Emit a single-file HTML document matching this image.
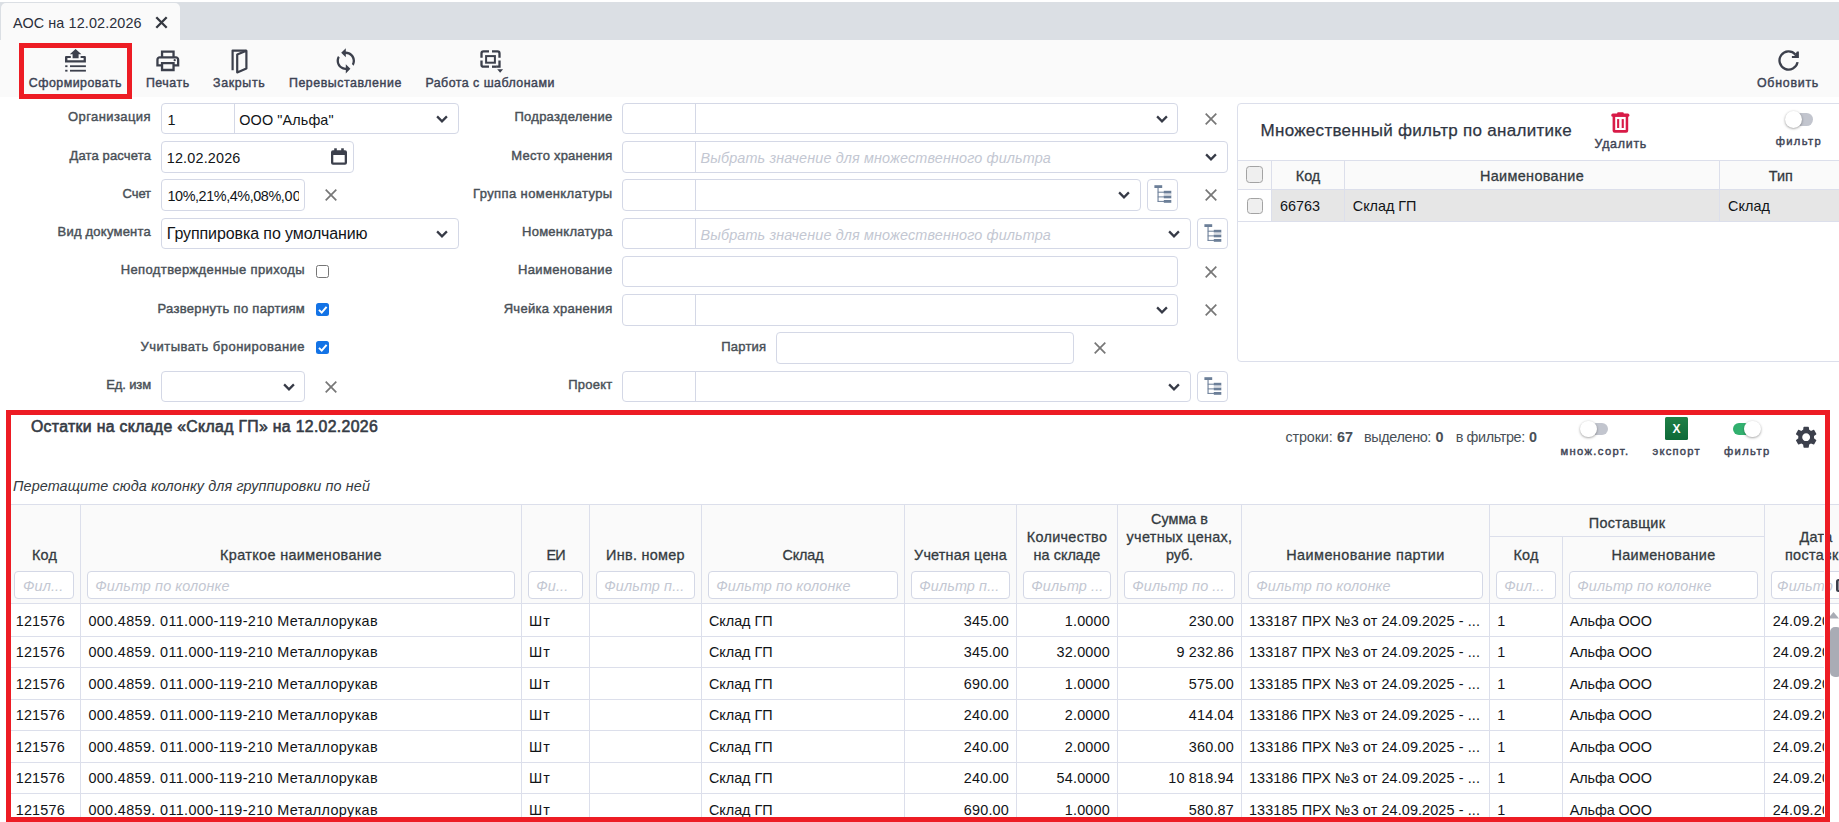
<!DOCTYPE html>
<html><head><meta charset="utf-8"><title>АОС</title>
<style>
html,body{margin:0;padding:0}
body{width:1839px;height:822px;overflow:hidden;background:#fff;position:relative;font-family:"Liberation Sans", sans-serif;}
.t{position:absolute;white-space:nowrap;line-height:20px;font-family:"Liberation Sans", sans-serif;}
.b{position:absolute;display:block}
</style></head><body>
<div class="b" style="left:0.00px;top:2.00px;width:1839.00px;height:38.00px;background:#dbdfe4"></div>
<div class="b" style="left:1.00px;top:3.00px;width:179.00px;height:37.00px;background:#fafafa;border-radius:5px 5px 0 0"></div>
<div class="b" style="left:0.00px;top:40.00px;width:1839.00px;height:57.00px;background:#fafafa"></div>
<div class="t" style="left:13.00px;top:13.01px;font-size:14.4px;font-weight:normal;font-style:normal;color:#2b2f3a;letter-spacing:0.109px;">АОС на 12.02.2026</div>
<svg class="b" style="left:155.00px;top:16.20px;" width="13" height="13" viewBox="0 0 13 13"><path d="M1.3 1.3 L11.7 11.7 M11.7 1.3 L1.3 11.7" stroke="#343840" stroke-width="2.3" fill="none" stroke-linecap="butt"/></svg>
<div class="t" style="left:28.80px;top:72.50px;font-size:12.4px;font-weight:normal;font-style:normal;color:#3d4354;letter-spacing:0.488px;-webkit-text-stroke:0.42px #3d4354;">Сформировать</div>
<div class="t" style="left:145.90px;top:72.50px;font-size:12.4px;font-weight:normal;font-style:normal;color:#3d4354;letter-spacing:0.535px;-webkit-text-stroke:0.42px #3d4354;">Печать</div>
<div class="t" style="left:213.00px;top:72.50px;font-size:12.4px;font-weight:normal;font-style:normal;color:#3d4354;letter-spacing:0.668px;-webkit-text-stroke:0.42px #3d4354;">Закрыть</div>
<div class="t" style="left:289.00px;top:72.50px;font-size:12.4px;font-weight:normal;font-style:normal;color:#3d4354;letter-spacing:0.536px;-webkit-text-stroke:0.42px #3d4354;">Перевыставление</div>
<div class="t" style="left:425.40px;top:72.50px;font-size:12.4px;font-weight:normal;font-style:normal;color:#3d4354;letter-spacing:0.479px;-webkit-text-stroke:0.42px #3d4354;">Работа с шаблонами</div>
<div class="t" style="left:1757.00px;top:72.50px;font-size:12.4px;font-weight:normal;font-style:normal;color:#3d4354;letter-spacing:0.737px;-webkit-text-stroke:0.42px #3d4354;">Обновить</div>
<svg class="b" style="left:64.00px;top:48.00px;" width="24" height="25" viewBox="64 48 24 25"><g fill="#3c404c">
<path d="M75.6 49 L81.4 54.3 L78.6 54.3 L78.6 58.3 L72.6 58.3 L72.6 54.3 L69.8 54.3 Z"/>
<path d="M66.1 55.9 H70.8 V58.1 H67.4 V60.3 H83.6 V58.1 H80.6 V55.9 H84.8 Q85.9 55.9 85.9 57 V62.6 H65 V57 Q65 55.9 66.1 55.9 Z"/>
<rect x="65.2" y="65.3" width="2.3" height="1.8"/><rect x="70" y="65.3" width="15.9" height="1.8"/>
<rect x="65.2" y="69.8" width="2.3" height="1.8"/><rect x="70" y="69.8" width="15.9" height="1.8"/>
</g></svg>
<svg class="b" style="left:153.70px;top:46.75px;" width="27.6" height="27.6" viewBox="0 0 24 24"><path fill="#3c404c" d="M19 8h-1V3H6v5H5c-1.66 0-3 1.34-3 3v6h4v4h12v-4h4v-6c0-1.66-1.34-3-3-3zM8 5h8v3H8V5zm8 12v2H8v-4h8v2zm2-2v-2H6v2H4v-4c0-.55.45-1 1-1h14c.55 0 1 .45 1 1v4h-2z"/><circle cx="18" cy="11.5" r="1" fill="#3c404c"/></svg>
<svg class="b" style="left:229.00px;top:47.00px;" width="22" height="28" viewBox="229 47 22 28"><g fill="none" stroke="#3c404c" stroke-width="2.2" stroke-linejoin="round" stroke-linecap="butt">
<path d="M232.6 70.2 V50.6 H246.4"/>
<path d="M237.2 54.6 L246.4 50.8 V68.6 L237.2 72.4 Z"/></g></svg>
<svg class="b" style="left:331.70px;top:46.70px;" width="27.6" height="27.6" viewBox="0 0 24 24"><path fill="#3c404c" d="M12 4V1L8 5l4 4V6c3.31 0 6 2.69 6 6 0 1.01-.25 1.97-.7 2.8l1.46 1.46C19.54 15.03 20 13.57 20 12c0-4.42-3.58-8-8-8zm0 14c-3.31 0-6-2.69-6-6 0-1.01.25-1.97.7-2.8L5.24 7.74C4.46 8.97 4 10.43 4 12c0 4.42 3.58 8 8 8v3l4-4-4-4v3z"/></svg>
<svg class="b" style="left:478.00px;top:48.00px;" width="28" height="27" viewBox="478 48 28 27"><g fill="none" stroke="#3c404c" stroke-width="2.3">
<path d="M481.5 57.8 V53.4 Q481.5 51.4 483.5 51.4 H489"/>
<path d="M492 51.4 H497.5 Q499.5 51.4 499.5 53.4 V57.8"/>
<path d="M481.5 60.5 V64.7 Q481.5 66.7 483.5 66.7 H489"/>
<path d="M499.5 60.5 V66.7 H496.2"/><path d="M492 66.7 H496.4" stroke-width="2.3"/>
<rect x="486.1" y="56.1" width="8.8" height="6.6" stroke-width="2"/></g>
<path fill="#3c404c" d="M497.2 69.3 H503.1 L500.15 72.8 Z"/></svg>
<svg class="b" style="left:1776.00px;top:48.00px;" width="26" height="26" viewBox="1776 48 26 26"><g fill="none" stroke="#3c404c" stroke-width="2.3" stroke-linecap="butt">
<path d="M1795.4 54.4 A9.1 9.1 0 1 0 1797.56 62.1"/></g>
<path fill="#3c404c" d="M1796.9 51.4 H1798.9 V58 H1791.9 V56 L1794.3 56 Z"/></svg>
<div class="b" style="left:19.00px;top:43.00px;width:113.00px;height:56.00px;border:5px solid #ed1c24;box-sizing:border-box"></div>
<div class="t" style="left:68.00px;top:106.80px;font-size:13px;font-weight:normal;font-style:normal;color:#495057;letter-spacing:0.418px;-webkit-text-stroke:0.42px #495057;">Организация</div>
<div class="t" style="left:69.50px;top:145.90px;font-size:13px;font-weight:normal;font-style:normal;color:#495057;letter-spacing:0.140px;-webkit-text-stroke:0.42px #495057;">Дата расчета</div>
<div class="t" style="left:122.50px;top:184.00px;font-size:13px;font-weight:normal;font-style:normal;color:#495057;letter-spacing:-0.067px;-webkit-text-stroke:0.42px #495057;">Счет</div>
<div class="t" style="left:57.50px;top:221.50px;font-size:13px;font-weight:normal;font-style:normal;color:#495057;letter-spacing:0.229px;-webkit-text-stroke:0.42px #495057;">Вид документа</div>
<div class="t" style="left:120.75px;top:260.40px;font-size:13px;font-weight:normal;font-style:normal;color:#495057;letter-spacing:0.378px;-webkit-text-stroke:0.42px #495057;">Неподтвержденные приходы</div>
<div class="t" style="left:157.50px;top:298.70px;font-size:13px;font-weight:normal;font-style:normal;color:#495057;letter-spacing:0.319px;-webkit-text-stroke:0.42px #495057;">Развернуть по партиям</div>
<div class="t" style="left:140.50px;top:336.90px;font-size:13px;font-weight:normal;font-style:normal;color:#495057;letter-spacing:0.473px;-webkit-text-stroke:0.42px #495057;">Учитывать бронирование</div>
<div class="t" style="left:106.25px;top:374.90px;font-size:13px;font-weight:normal;font-style:normal;color:#495057;letter-spacing:-0.127px;-webkit-text-stroke:0.42px #495057;">Ед. изм</div>
<div class="b" style="left:161.00px;top:103.00px;width:298.20px;height:31.00px;border:1px solid #d4d8e6;border-radius:4px;box-sizing:border-box;background:#fff"></div>
<div class="b" style="left:233.50px;top:104.00px;width:1.00px;height:29.00px;background:#d4d8e6"></div>
<div class="t" style="left:167.50px;top:109.61px;font-size:14.4px;font-weight:normal;font-style:normal;color:#111417;letter-spacing:0.000px;">1</div>
<div class="t" style="left:239.30px;top:109.61px;font-size:14.4px;font-weight:normal;font-style:normal;color:#111417;letter-spacing:0.115px;">ООО &quot;Альфа&quot;</div>
<svg class="b" style="left:435.00px;top:114.00px;" width="14" height="10" viewBox="-7 -5 14 10"><path d="M-4.9 -2.6 L0 2.3 L4.9 -2.6" fill="none" stroke="#363a46" stroke-width="2.3"/></svg>
<div class="b" style="left:161.00px;top:141.00px;width:193.30px;height:32.00px;border:1px solid #d4d8e6;border-radius:4px;box-sizing:border-box;background:#fff"></div>
<div class="t" style="left:166.75px;top:147.61px;font-size:14.4px;font-weight:normal;font-style:normal;color:#111417;letter-spacing:0.173px;">12.02.2026</div>
<svg class="b" style="left:330.00px;top:147.00px;" width="18" height="19" viewBox="330 147 18 19"><g fill="#3c404c"><rect x="334.2" y="148.3" width="2.6" height="4"/><rect x="341.2" y="148.3" width="2.6" height="4"/>
<path fill-rule="evenodd" d="M333 150.2 H345 Q347 150.2 347 152.2 V162.8 Q347 164.8 345 164.8 H333 Q331 164.8 331 162.8 V152.2 Q331 150.2 333 150.2 Z M333.3 155 V162.5 H344.7 V155 Z"/></g></svg>
<div class="b" style="left:161.00px;top:179.00px;width:143.60px;height:32.00px;border:1px solid #d4d8e6;border-radius:4px;box-sizing:border-box;background:#fff"></div>
<div class="b" style="left:162px;top:180.00px;width:137px;height:28px;overflow:hidden"><div class="t" style="left:5.5px;top:5.61px;font-size:14.4px;letter-spacing:-0.42px;color:#111417">10%,21%,4%,08%,<span style="letter-spacing:0.45px">00%,01%</span></div></div>
<svg class="b" style="left:324.00px;top:188.10px;" width="14" height="14" viewBox="-7 -7 14 14"><path d="M-5.3 -5.3 L5.3 5.3 M5.3 -5.3 L-5.3 5.3" fill="none" stroke="#777" stroke-width="1.7"/></svg>
<div class="b" style="left:161.00px;top:218.00px;width:298.20px;height:31.00px;border:1px solid #d4d8e6;border-radius:4px;box-sizing:border-box;background:#fff"></div>
<div class="t" style="left:166.75px;top:224.06px;font-size:16px;font-weight:normal;font-style:normal;color:#111417;letter-spacing:-0.098px;">Группировка по умолчанию</div>
<svg class="b" style="left:435.00px;top:229.00px;" width="14" height="10" viewBox="-7 -5 14 10"><path d="M-4.9 -2.6 L0 2.3 L4.9 -2.6" fill="none" stroke="#363a46" stroke-width="2.3"/></svg>
<div class="b" style="left:316.00px;top:264.60px;width:13.40px;height:13.40px;background:#fff;border:1.3px solid #767676;border-radius:2.5px;box-sizing:border-box"></div>
<div class="b" style="left:316.00px;top:302.60px;width:13.40px;height:13.40px;background:#1373e6;border-radius:2.5px"></div>
<svg class="b" style="left:316.00px;top:302.60px;" width="13.4" height="13.4" viewBox="0 0 13.4 13.4"><path d="M3 6.9 L5.7 9.6 L10.6 3.9" fill="none" stroke="#fff" stroke-width="2"/></svg>
<div class="b" style="left:316.00px;top:340.60px;width:13.40px;height:13.40px;background:#1373e6;border-radius:2.5px"></div>
<svg class="b" style="left:316.00px;top:340.60px;" width="13.4" height="13.4" viewBox="0 0 13.4 13.4"><path d="M3 6.9 L5.7 9.6 L10.6 3.9" fill="none" stroke="#fff" stroke-width="2"/></svg>
<div class="b" style="left:161.00px;top:371.00px;width:143.60px;height:31.00px;border:1px solid #d4d8e6;border-radius:4px;box-sizing:border-box;background:#fff"></div>
<svg class="b" style="left:281.75px;top:382.00px;" width="14" height="10" viewBox="-7 -5 14 10"><path d="M-4.9 -2.6 L0 2.3 L4.9 -2.6" fill="none" stroke="#363a46" stroke-width="2.3"/></svg>
<svg class="b" style="left:324.00px;top:380.10px;" width="14" height="14" viewBox="-7 -7 14 14"><path d="M-5.3 -5.3 L5.3 5.3 M5.3 -5.3 L-5.3 5.3" fill="none" stroke="#777" stroke-width="1.7"/></svg>
<div class="t" style="left:514.50px;top:106.80px;font-size:13px;font-weight:normal;font-style:normal;color:#495057;letter-spacing:0.251px;-webkit-text-stroke:0.42px #495057;">Подразделение</div>
<div class="t" style="left:511.25px;top:145.90px;font-size:13px;font-weight:normal;font-style:normal;color:#495057;letter-spacing:0.218px;-webkit-text-stroke:0.42px #495057;">Место хранения</div>
<div class="t" style="left:473.00px;top:184.00px;font-size:13px;font-weight:normal;font-style:normal;color:#495057;letter-spacing:0.397px;-webkit-text-stroke:0.42px #495057;">Группа номенклатуры</div>
<div class="t" style="left:522.00px;top:221.50px;font-size:13px;font-weight:normal;font-style:normal;color:#495057;letter-spacing:0.271px;-webkit-text-stroke:0.42px #495057;">Номенклатура</div>
<div class="t" style="left:518.00px;top:260.40px;font-size:13px;font-weight:normal;font-style:normal;color:#495057;letter-spacing:0.365px;-webkit-text-stroke:0.42px #495057;">Наименование</div>
<div class="t" style="left:503.70px;top:298.70px;font-size:13px;font-weight:normal;font-style:normal;color:#495057;letter-spacing:0.299px;-webkit-text-stroke:0.42px #495057;">Ячейка хранения</div>
<div class="t" style="left:721.30px;top:336.90px;font-size:13px;font-weight:normal;font-style:normal;color:#495057;letter-spacing:0.204px;-webkit-text-stroke:0.42px #495057;">Партия</div>
<div class="t" style="left:568.20px;top:374.90px;font-size:13px;font-weight:normal;font-style:normal;color:#495057;letter-spacing:0.246px;-webkit-text-stroke:0.42px #495057;">Проект</div>
<div class="b" style="left:622.00px;top:103.00px;width:555.50px;height:31.00px;border:1px solid #d4d8e6;border-radius:4px;box-sizing:border-box;background:#fff"></div>
<div class="b" style="left:694.50px;top:104.00px;width:1.00px;height:29.00px;background:#d4d8e6"></div>
<svg class="b" style="left:1155.00px;top:114.00px;" width="14" height="10" viewBox="-7 -5 14 10"><path d="M-4.9 -2.6 L0 2.3 L4.9 -2.6" fill="none" stroke="#363a46" stroke-width="2.3"/></svg>
<svg class="b" style="left:1204.00px;top:112.10px;" width="14" height="14" viewBox="-7 -7 14 14"><path d="M-5.3 -5.3 L5.3 5.3 M5.3 -5.3 L-5.3 5.3" fill="none" stroke="#777" stroke-width="1.7"/></svg>
<div class="b" style="left:622.00px;top:141.00px;width:605.50px;height:32.00px;border:1px solid #d4d8e6;border-radius:4px;box-sizing:border-box;background:#fff"></div>
<div class="b" style="left:694.50px;top:142.00px;width:1.00px;height:30.00px;background:#d4d8e6"></div>
<svg class="b" style="left:1204.00px;top:152.00px;" width="14" height="10" viewBox="-7 -5 14 10"><path d="M-4.9 -2.6 L0 2.3 L4.9 -2.6" fill="none" stroke="#363a46" stroke-width="2.3"/></svg>
<div class="t" style="left:700.50px;top:147.61px;font-size:14.4px;font-weight:normal;font-style:italic;color:#c3c7d2;letter-spacing:0.139px;">Выбрать значение для множественного фильтра</div>
<div class="b" style="left:622.00px;top:179.00px;width:518.50px;height:32.00px;border:1px solid #d4d8e6;border-radius:4px;box-sizing:border-box;background:#fff"></div>
<div class="b" style="left:694.50px;top:180.00px;width:1.00px;height:30.00px;background:#d4d8e6"></div>
<svg class="b" style="left:1116.75px;top:190.00px;" width="14" height="10" viewBox="-7 -5 14 10"><path d="M-4.9 -2.6 L0 2.3 L4.9 -2.6" fill="none" stroke="#363a46" stroke-width="2.3"/></svg>
<div class="b" style="left:1147.20px;top:179.00px;width:30.50px;height:32.00px;border:1px solid #d4d8e6;border-radius:4px;box-sizing:border-box;background:#fff"></div>
<svg class="b" style="left:1147.20px;top:179.00px;" width="31" height="31" viewBox="1147.2 179.4 31 31"><g fill="#6c7f98">
<rect x="1154.6" y="185.6" width="7.8" height="2.8"/>
<rect x="1157.7" y="188.4" width="1.1" height="13.9"/>
<rect x="1158" y="192.1" width="6.2" height="1"/><rect x="1158" y="196.8" width="6.2" height="1"/><rect x="1158" y="201.3" width="6.2" height="1"/>
<rect x="1164" y="191.2" width="7.5" height="2.8"/><rect x="1164" y="195.9" width="7.5" height="2.8"/><rect x="1164" y="200.4" width="7.5" height="2.8"/>
</g><rect x="1164" y="194" width="7.5" height="1.9" fill="#d9dde3"/></svg>
<svg class="b" style="left:1204.00px;top:188.10px;" width="14" height="14" viewBox="-7 -7 14 14"><path d="M-5.3 -5.3 L5.3 5.3 M5.3 -5.3 L-5.3 5.3" fill="none" stroke="#777" stroke-width="1.7"/></svg>
<div class="b" style="left:622.00px;top:218.00px;width:568.50px;height:31.00px;border:1px solid #d4d8e6;border-radius:4px;box-sizing:border-box;background:#fff"></div>
<div class="b" style="left:694.50px;top:219.00px;width:1.00px;height:29.00px;background:#d4d8e6"></div>
<svg class="b" style="left:1167.00px;top:229.00px;" width="14" height="10" viewBox="-7 -5 14 10"><path d="M-4.9 -2.6 L0 2.3 L4.9 -2.6" fill="none" stroke="#363a46" stroke-width="2.3"/></svg>
<div class="b" style="left:1197.20px;top:218.00px;width:30.50px;height:31.00px;border:1px solid #d4d8e6;border-radius:4px;box-sizing:border-box;background:#fff"></div>
<svg class="b" style="left:1197.20px;top:218.00px;" width="31" height="31" viewBox="1147.2 179.4 31 31"><g fill="#6c7f98">
<rect x="1154.6" y="185.6" width="7.8" height="2.8"/>
<rect x="1157.7" y="188.4" width="1.1" height="13.9"/>
<rect x="1158" y="192.1" width="6.2" height="1"/><rect x="1158" y="196.8" width="6.2" height="1"/><rect x="1158" y="201.3" width="6.2" height="1"/>
<rect x="1164" y="191.2" width="7.5" height="2.8"/><rect x="1164" y="195.9" width="7.5" height="2.8"/><rect x="1164" y="200.4" width="7.5" height="2.8"/>
</g><rect x="1164" y="194" width="7.5" height="1.9" fill="#d9dde3"/></svg>
<div class="t" style="left:700.50px;top:224.61px;font-size:14.4px;font-weight:normal;font-style:italic;color:#c3c7d2;letter-spacing:0.139px;">Выбрать значение для множественного фильтра</div>
<div class="b" style="left:622.00px;top:256.00px;width:555.50px;height:31.00px;border:1px solid #d4d8e6;border-radius:4px;box-sizing:border-box;background:#fff"></div>
<svg class="b" style="left:1204.00px;top:265.10px;" width="14" height="14" viewBox="-7 -7 14 14"><path d="M-5.3 -5.3 L5.3 5.3 M5.3 -5.3 L-5.3 5.3" fill="none" stroke="#777" stroke-width="1.7"/></svg>
<div class="b" style="left:622.00px;top:294.00px;width:555.50px;height:32.00px;border:1px solid #d4d8e6;border-radius:4px;box-sizing:border-box;background:#fff"></div>
<div class="b" style="left:694.50px;top:295.00px;width:1.00px;height:30.00px;background:#d4d8e6"></div>
<svg class="b" style="left:1155.00px;top:305.00px;" width="14" height="10" viewBox="-7 -5 14 10"><path d="M-4.9 -2.6 L0 2.3 L4.9 -2.6" fill="none" stroke="#363a46" stroke-width="2.3"/></svg>
<svg class="b" style="left:1204.00px;top:303.10px;" width="14" height="14" viewBox="-7 -7 14 14"><path d="M-5.3 -5.3 L5.3 5.3 M5.3 -5.3 L-5.3 5.3" fill="none" stroke="#777" stroke-width="1.7"/></svg>
<div class="b" style="left:776.00px;top:332.00px;width:298.00px;height:32.00px;border:1px solid #d4d8e6;border-radius:4px;box-sizing:border-box;background:#fff"></div>
<svg class="b" style="left:1092.80px;top:341.10px;" width="14" height="14" viewBox="-7 -7 14 14"><path d="M-5.3 -5.3 L5.3 5.3 M5.3 -5.3 L-5.3 5.3" fill="none" stroke="#777" stroke-width="1.7"/></svg>
<div class="b" style="left:622.00px;top:371.00px;width:568.50px;height:31.00px;border:1px solid #d4d8e6;border-radius:4px;box-sizing:border-box;background:#fff"></div>
<div class="b" style="left:694.50px;top:372.00px;width:1.00px;height:29.00px;background:#d4d8e6"></div>
<svg class="b" style="left:1167.00px;top:382.00px;" width="14" height="10" viewBox="-7 -5 14 10"><path d="M-4.9 -2.6 L0 2.3 L4.9 -2.6" fill="none" stroke="#363a46" stroke-width="2.3"/></svg>
<div class="b" style="left:1197.20px;top:371.00px;width:30.50px;height:31.00px;border:1px solid #d4d8e6;border-radius:4px;box-sizing:border-box;background:#fff"></div>
<svg class="b" style="left:1197.20px;top:371.00px;" width="31" height="31" viewBox="1147.2 179.4 31 31"><g fill="#6c7f98">
<rect x="1154.6" y="185.6" width="7.8" height="2.8"/>
<rect x="1157.7" y="188.4" width="1.1" height="13.9"/>
<rect x="1158" y="192.1" width="6.2" height="1"/><rect x="1158" y="196.8" width="6.2" height="1"/><rect x="1158" y="201.3" width="6.2" height="1"/>
<rect x="1164" y="191.2" width="7.5" height="2.8"/><rect x="1164" y="195.9" width="7.5" height="2.8"/><rect x="1164" y="200.4" width="7.5" height="2.8"/>
</g><rect x="1164" y="194" width="7.5" height="1.9" fill="#d9dde3"/></svg>
<div class="b" style="left:1237.00px;top:103.00px;width:608.00px;height:259.00px;border:1px solid #dcdfeb;border-radius:4px;box-sizing:border-box;background:#fff"></div>
<div class="t" style="left:1260.50px;top:120.81px;font-size:17px;font-weight:normal;font-style:normal;color:#2f3542;letter-spacing:0.294px;-webkit-text-stroke:0.25px #2f3542;">Множественный фильтр по аналитике</div>
<svg class="b" style="left:1608.00px;top:110.00px;" width="26" height="26" viewBox="1608 110 26 26"><g fill="#d81b47"><rect x="1617.1" y="112.2" width="6.7" height="2.4" rx="1.1"/><rect x="1611.3" y="113.5" width="18.1" height="3.2" rx="1.5"/><path fill-rule="evenodd" d="M1612.6 116 H1628.2 V130.7 Q1628.2 132.8 1626.1 132.8 H1614.7 Q1612.6 132.8 1612.6 130.7 Z M1615.2 116.7 V130.1 H1625.7 V116.7 Z"/><rect x="1617.1" y="119.1" width="2.1" height="8.9"/><rect x="1621.7" y="119.1" width="2.1" height="8.9"/></g></svg>
<div class="t" style="left:1594.50px;top:133.70px;font-size:12.4px;font-weight:normal;font-style:normal;color:#3d4354;letter-spacing:0.742px;-webkit-text-stroke:0.42px #3d4354;">Удалить</div>
<div class="b" style="left:1786.50px;top:113.10px;width:26.20px;height:12.60px;background:#c2c5ce;border-radius:6.4px"></div>
<div class="b" style="left:1784.90px;top:111.00px;width:16.80px;height:16.80px;background:#fff;border-radius:50%;box-shadow:0 0.8px 2.5px rgba(0,0,0,.4)"></div>
<div class="t" style="left:1775.75px;top:131.42px;font-size:11.2px;font-weight:normal;font-style:normal;color:#3d4354;letter-spacing:1.328px;-webkit-text-stroke:0.42px #3d4354;">фильтр</div>
<div class="b" style="left:1238.00px;top:160.00px;width:601.00px;height:30.00px;background:#fafafa;border-top:1px solid #dcdfeb;border-bottom:1px solid #dcdfeb;box-sizing:border-box"></div>
<div class="b" style="left:1271.50px;top:190.00px;width:567.50px;height:31.00px;background:#e6e6e6"></div>
<div class="b" style="left:1238.00px;top:221.00px;width:601.00px;height:1.00px;background:#dcdfeb"></div>
<div class="b" style="left:1271.00px;top:160.00px;width:1.00px;height:62.00px;background:#dcdfeb"></div>
<div class="b" style="left:1344.00px;top:160.00px;width:1.00px;height:62.00px;background:#dcdfeb"></div>
<div class="b" style="left:1719.00px;top:160.00px;width:1.00px;height:62.00px;background:#dcdfeb"></div>
<div class="b" style="left:1246.20px;top:166.20px;width:16.60px;height:16.60px;background:#efefef;border:1.2px solid #a3a3a3;border-radius:3.5px;box-sizing:border-box"></div>
<div class="b" style="left:1246.60px;top:197.80px;width:16.60px;height:16.60px;background:#efefef;border:1.2px solid #a3a3a3;border-radius:3.5px;box-sizing:border-box"></div>
<div class="t" style="left:1295.77px;top:166.31px;font-size:14.4px;font-weight:normal;font-style:normal;color:#343a40;letter-spacing:0.000px;-webkit-text-stroke:0.3px #343a40;">Код</div>
<div class="t" style="left:1480.00px;top:166.31px;font-size:14.4px;font-weight:normal;font-style:normal;color:#343a40;letter-spacing:0.353px;-webkit-text-stroke:0.3px #343a40;">Наименование</div>
<div class="t" style="left:1768.76px;top:166.31px;font-size:14.4px;font-weight:normal;font-style:normal;color:#343a40;letter-spacing:0.000px;-webkit-text-stroke:0.3px #343a40;">Тип</div>
<div class="t" style="left:1280.00px;top:196.31px;font-size:14.4px;font-weight:normal;font-style:normal;color:#111417;letter-spacing:0.000px;">66763</div>
<div class="t" style="left:1352.80px;top:196.31px;font-size:14.4px;font-weight:normal;font-style:normal;color:#111417;letter-spacing:-0.035px;">Склад ГП</div>
<div class="t" style="left:1728.00px;top:196.31px;font-size:14.4px;font-weight:normal;font-style:normal;color:#111417;letter-spacing:0.071px;">Склад</div>
<div class="b" style="left:8.00px;top:504.00px;width:1831.00px;height:99.00px;background:#fafafa"></div>
<div class="b" style="left:8.00px;top:504.00px;width:1831.00px;height:1.00px;background:#dcdfeb"></div>
<div class="b" style="left:8.00px;top:603.00px;width:1831.00px;height:1.00px;background:#dcdfeb"></div>
<div class="b" style="left:1489.00px;top:536.00px;width:275.00px;height:1.00px;background:#dcdfeb"></div>
<div class="b" style="left:8.00px;top:636.00px;width:1822.00px;height:1.00px;background:#dcdfeb"></div>
<div class="b" style="left:8.00px;top:667.00px;width:1822.00px;height:1.00px;background:#dcdfeb"></div>
<div class="b" style="left:8.00px;top:699.00px;width:1822.00px;height:1.00px;background:#dcdfeb"></div>
<div class="b" style="left:8.00px;top:730.00px;width:1822.00px;height:1.00px;background:#dcdfeb"></div>
<div class="b" style="left:8.00px;top:762.00px;width:1822.00px;height:1.00px;background:#dcdfeb"></div>
<div class="b" style="left:8.00px;top:793.00px;width:1822.00px;height:1.00px;background:#dcdfeb"></div>
<div class="b" style="left:80.00px;top:504.00px;width:1.00px;height:318.00px;background:#dcdfeb"></div>
<div class="b" style="left:521.00px;top:504.00px;width:1.00px;height:318.00px;background:#dcdfeb"></div>
<div class="b" style="left:589.00px;top:504.00px;width:1.00px;height:318.00px;background:#dcdfeb"></div>
<div class="b" style="left:701.00px;top:504.00px;width:1.00px;height:318.00px;background:#dcdfeb"></div>
<div class="b" style="left:904.00px;top:504.00px;width:1.00px;height:318.00px;background:#dcdfeb"></div>
<div class="b" style="left:1016.00px;top:504.00px;width:1.00px;height:318.00px;background:#dcdfeb"></div>
<div class="b" style="left:1117.00px;top:504.00px;width:1.00px;height:318.00px;background:#dcdfeb"></div>
<div class="b" style="left:1241.00px;top:504.00px;width:1.00px;height:318.00px;background:#dcdfeb"></div>
<div class="b" style="left:1489.00px;top:504.00px;width:1.00px;height:318.00px;background:#dcdfeb"></div>
<div class="b" style="left:1562.00px;top:536.50px;width:1.00px;height:285.50px;background:#dcdfeb"></div>
<div class="b" style="left:1764.00px;top:504.00px;width:1.00px;height:318.00px;background:#dcdfeb"></div>
<div class="t" style="left:31.00px;top:416.53px;font-size:15.8px;font-weight:normal;font-style:normal;color:#353b45;letter-spacing:0.327px;-webkit-text-stroke:0.6px #353b45;">Остатки на складе «Склад ГП» на 12.02.2026</div>
<div class="t" style="left:1285.50px;top:426.81px;font-size:14.4px;font-weight:normal;font-style:normal;color:#495057;letter-spacing:-0.161px;">строки:</div>
<div class="t" style="left:1337.00px;top:426.81px;font-size:14.4px;font-weight:bold;font-style:normal;color:#495057;letter-spacing:0.000px;">67</div>
<div class="t" style="left:1364.00px;top:426.81px;font-size:14.4px;font-weight:normal;font-style:normal;color:#495057;letter-spacing:-0.362px;">выделено:</div>
<div class="t" style="left:1435.50px;top:426.81px;font-size:14.4px;font-weight:bold;font-style:normal;color:#495057;letter-spacing:0.000px;">0</div>
<div class="t" style="left:1455.75px;top:426.81px;font-size:14.4px;font-weight:normal;font-style:normal;color:#495057;letter-spacing:-0.389px;">в фильтре:</div>
<div class="t" style="left:1529.00px;top:426.81px;font-size:14.4px;font-weight:bold;font-style:normal;color:#495057;letter-spacing:0.000px;">0</div>
<div class="b" style="left:1582.00px;top:422.60px;width:26.20px;height:12.60px;background:#c2c5ce;border-radius:6.4px"></div>
<div class="b" style="left:1580.40px;top:420.50px;width:16.80px;height:16.80px;background:#fff;border-radius:50%;box-shadow:0 0.8px 2.5px rgba(0,0,0,.4)"></div>
<div class="t" style="left:1560.50px;top:441.42px;font-size:11.2px;font-weight:normal;font-style:normal;color:#3d4354;letter-spacing:1.353px;-webkit-text-stroke:0.42px #3d4354;">множ.сорт.</div>
<div class="b" style="left:1665.20px;top:417.20px;width:22.60px;height:22.40px;background:linear-gradient(180deg,#1f8047,#0e6a38);border-radius:1.5px"></div>
<div class="t" style="left:1672.60px;top:418.74px;font-size:12px;font-weight:bold;font-style:normal;color:#fff;letter-spacing:0.000px;">X</div>
<div class="t" style="left:1652.50px;top:441.42px;font-size:11.2px;font-weight:normal;font-style:normal;color:#3d4354;letter-spacing:1.221px;-webkit-text-stroke:0.42px #3d4354;">экспорт</div>
<div class="b" style="left:1732.60px;top:422.60px;width:26.40px;height:12.60px;background:linear-gradient(90deg,#2fae6c,#3cb878);border-radius:6.4px"></div>
<div class="b" style="left:1743.80px;top:420.50px;width:16.80px;height:16.80px;background:#fff;border-radius:50%;box-shadow:0 0.8px 2.5px rgba(0,0,0,.4)"></div>
<div class="t" style="left:1724.00px;top:441.42px;font-size:11.2px;font-weight:normal;font-style:normal;color:#3d4354;letter-spacing:1.370px;-webkit-text-stroke:0.42px #3d4354;">фильтр</div>
<svg class="b" style="left:1793.35px;top:424.10px;" width="26.3" height="26.3" viewBox="0 0 24 24"><path fill="#3c404c" d="M19.14 12.94c.04-.3.06-.61.06-.94 0-.32-.02-.64-.07-.94l2.03-1.58c.18-.14.23-.41.12-.61l-1.92-3.32c-.12-.22-.37-.29-.59-.22l-2.39.96c-.5-.38-1.03-.7-1.62-.94l-.36-2.54c-.04-.24-.24-.41-.48-.41h-3.84c-.24 0-.43.17-.47.41l-.36 2.54c-.59.24-1.13.57-1.62.94l-2.39-.96c-.22-.08-.47 0-.59.22L2.74 8.87c-.12.21-.08.47.12.61l2.03 1.58c-.05.3-.09.63-.09.94s.02.64.07.94l-2.03 1.58c-.18.14-.23.41-.12.61l1.92 3.32c.12.22.37.29.59.22l2.39-.96c.5.38 1.03.7 1.62.94l.36 2.54c.05.24.24.41.48.41h3.84c.24 0 .44-.17.47-.41l.36-2.54c.59-.24 1.13-.56 1.62-.94l2.39.96c.22.08.47 0 .59-.22l1.92-3.32c.12-.22.07-.47-.12-.61l-2.01-1.58zM12 15.6c-1.98 0-3.6-1.62-3.6-3.6s1.62-3.6 3.6-3.6 3.6 1.62 3.6 3.6-1.62 3.6-3.6 3.6z"/></svg>
<div class="t" style="left:13.00px;top:476.01px;font-size:14.4px;font-weight:normal;font-style:italic;color:#343a40;letter-spacing:0.100px;">Перетащите сюда колонку для группировки по ней</div>
<div class="t" style="left:31.88px;top:545.01px;font-size:14.4px;font-weight:normal;font-style:normal;color:#343a40;letter-spacing:0.261px;-webkit-text-stroke:0.3px #343a40;">Код</div>
<div class="t" style="left:220.12px;top:545.01px;font-size:14.4px;font-weight:normal;font-style:normal;color:#343a40;letter-spacing:0.365px;-webkit-text-stroke:0.3px #343a40;">Краткое наименование</div>
<div class="t" style="left:546.38px;top:545.01px;font-size:14.4px;font-weight:normal;font-style:normal;color:#343a40;letter-spacing:-0.846px;-webkit-text-stroke:0.3px #343a40;">ЕИ</div>
<div class="t" style="left:606.12px;top:545.01px;font-size:14.4px;font-weight:normal;font-style:normal;color:#343a40;letter-spacing:0.297px;-webkit-text-stroke:0.3px #343a40;">Инв. номер</div>
<div class="t" style="left:782.62px;top:545.01px;font-size:14.4px;font-weight:normal;font-style:normal;color:#343a40;letter-spacing:-0.179px;-webkit-text-stroke:0.3px #343a40;">Склад</div>
<div class="t" style="left:914.05px;top:545.01px;font-size:14.4px;font-weight:normal;font-style:normal;color:#343a40;letter-spacing:0.197px;-webkit-text-stroke:0.3px #343a40;">Учетная цена</div>
<div class="t" style="left:1033.62px;top:545.01px;font-size:14.4px;font-weight:normal;font-style:normal;color:#343a40;letter-spacing:0.039px;-webkit-text-stroke:0.3px #343a40;">на складе</div>
<div class="t" style="left:1026.75px;top:527.01px;font-size:14.4px;font-weight:normal;font-style:normal;color:#343a40;letter-spacing:0.322px;-webkit-text-stroke:0.3px #343a40;">Количество</div>
<div class="t" style="left:1166.00px;top:545.01px;font-size:14.4px;font-weight:normal;font-style:normal;color:#343a40;letter-spacing:-0.110px;-webkit-text-stroke:0.3px #343a40;">руб.</div>
<div class="t" style="left:1126.62px;top:527.01px;font-size:14.4px;font-weight:normal;font-style:normal;color:#343a40;letter-spacing:0.302px;-webkit-text-stroke:0.3px #343a40;">учетных ценах,</div>
<div class="t" style="left:1151.00px;top:509.01px;font-size:14.4px;font-weight:normal;font-style:normal;color:#343a40;letter-spacing:0.020px;-webkit-text-stroke:0.3px #343a40;">Сумма в</div>
<div class="t" style="left:1286.25px;top:545.01px;font-size:14.4px;font-weight:normal;font-style:normal;color:#343a40;letter-spacing:0.452px;-webkit-text-stroke:0.3px #343a40;">Наименование партии</div>
<div class="t" style="left:1513.38px;top:545.01px;font-size:14.4px;font-weight:normal;font-style:normal;color:#343a40;letter-spacing:0.261px;-webkit-text-stroke:0.3px #343a40;">Код</div>
<div class="t" style="left:1611.38px;top:545.01px;font-size:14.4px;font-weight:normal;font-style:normal;color:#343a40;letter-spacing:0.374px;-webkit-text-stroke:0.3px #343a40;">Наименование</div>
<div class="t" style="left:1588.75px;top:512.51px;font-size:14.4px;font-weight:normal;font-style:normal;color:#343a40;letter-spacing:0.301px;-webkit-text-stroke:0.3px #343a40;">Поставщик</div>
<div class="t" style="left:1785.00px;top:545.01px;font-size:14.4px;font-weight:normal;font-style:normal;color:#343a40;letter-spacing:0.325px;-webkit-text-stroke:0.3px #343a40;">поставки</div>
<div class="t" style="left:1799.50px;top:527.01px;font-size:14.4px;font-weight:normal;font-style:normal;color:#343a40;letter-spacing:0.283px;-webkit-text-stroke:0.3px #343a40;">Дата</div>
<div class="b" style="left:14.20px;top:571.30px;width:60.00px;height:27.50px;border:1px solid #d4d8e6;border-radius:4px;box-sizing:border-box;background:#fff"></div>
<div class="t" style="left:23.00px;top:575.51px;font-size:14.4px;font-weight:normal;font-style:italic;color:#c3c7d2;letter-spacing:0.000px;letter-spacing:0.12px;">Фил...</div>
<div class="b" style="left:86.50px;top:571.30px;width:428.70px;height:27.50px;border:1px solid #d4d8e6;border-radius:4px;box-sizing:border-box;background:#fff"></div>
<div class="t" style="left:95.30px;top:575.51px;font-size:14.4px;font-weight:normal;font-style:italic;color:#c3c7d2;letter-spacing:0.000px;letter-spacing:0.12px;">Фильтр по колонке</div>
<div class="b" style="left:527.50px;top:571.30px;width:55.70px;height:27.50px;border:1px solid #d4d8e6;border-radius:4px;box-sizing:border-box;background:#fff"></div>
<div class="t" style="left:536.30px;top:575.51px;font-size:14.4px;font-weight:normal;font-style:italic;color:#c3c7d2;letter-spacing:0.000px;letter-spacing:0.12px;">Фи...</div>
<div class="b" style="left:595.50px;top:571.30px;width:99.70px;height:27.50px;border:1px solid #d4d8e6;border-radius:4px;box-sizing:border-box;background:#fff"></div>
<div class="t" style="left:604.30px;top:575.51px;font-size:14.4px;font-weight:normal;font-style:italic;color:#c3c7d2;letter-spacing:0.000px;letter-spacing:0.12px;">Фильтр п...</div>
<div class="b" style="left:707.50px;top:571.30px;width:190.70px;height:27.50px;border:1px solid #d4d8e6;border-radius:4px;box-sizing:border-box;background:#fff"></div>
<div class="t" style="left:716.30px;top:575.51px;font-size:14.4px;font-weight:normal;font-style:italic;color:#c3c7d2;letter-spacing:0.000px;letter-spacing:0.12px;">Фильтр по колонке</div>
<div class="b" style="left:910.50px;top:571.30px;width:99.70px;height:27.50px;border:1px solid #d4d8e6;border-radius:4px;box-sizing:border-box;background:#fff"></div>
<div class="t" style="left:919.30px;top:575.51px;font-size:14.4px;font-weight:normal;font-style:italic;color:#c3c7d2;letter-spacing:0.000px;letter-spacing:0.12px;">Фильтр п...</div>
<div class="b" style="left:1022.50px;top:571.30px;width:88.70px;height:27.50px;border:1px solid #d4d8e6;border-radius:4px;box-sizing:border-box;background:#fff"></div>
<div class="t" style="left:1031.30px;top:575.51px;font-size:14.4px;font-weight:normal;font-style:italic;color:#c3c7d2;letter-spacing:0.000px;letter-spacing:0.12px;">Фильтр ...</div>
<div class="b" style="left:1123.50px;top:571.30px;width:111.70px;height:27.50px;border:1px solid #d4d8e6;border-radius:4px;box-sizing:border-box;background:#fff"></div>
<div class="t" style="left:1132.30px;top:575.51px;font-size:14.4px;font-weight:normal;font-style:italic;color:#c3c7d2;letter-spacing:0.000px;letter-spacing:0.12px;">Фильтр по ...</div>
<div class="b" style="left:1247.50px;top:571.30px;width:235.70px;height:27.50px;border:1px solid #d4d8e6;border-radius:4px;box-sizing:border-box;background:#fff"></div>
<div class="t" style="left:1256.30px;top:575.51px;font-size:14.4px;font-weight:normal;font-style:italic;color:#c3c7d2;letter-spacing:0.000px;letter-spacing:0.12px;">Фильтр по колонке</div>
<div class="b" style="left:1495.50px;top:571.30px;width:60.70px;height:27.50px;border:1px solid #d4d8e6;border-radius:4px;box-sizing:border-box;background:#fff"></div>
<div class="t" style="left:1504.30px;top:575.51px;font-size:14.4px;font-weight:normal;font-style:italic;color:#c3c7d2;letter-spacing:0.000px;letter-spacing:0.12px;">Фил...</div>
<div class="b" style="left:1568.50px;top:571.30px;width:189.70px;height:27.50px;border:1px solid #d4d8e6;border-radius:4px;box-sizing:border-box;background:#fff"></div>
<div class="t" style="left:1577.30px;top:575.51px;font-size:14.4px;font-weight:normal;font-style:italic;color:#c3c7d2;letter-spacing:0.000px;letter-spacing:0.12px;">Фильтр по колонке</div>
<div class="b" style="left:1770.50px;top:571.30px;width:90.70px;height:27.50px;border:1px solid #d4d8e6;border-radius:4px;box-sizing:border-box;background:#fff"></div>
<div class="t" style="left:1777.10px;top:575.51px;font-size:14.4px;font-weight:normal;font-style:italic;color:#c3c7d2;letter-spacing:0.000px;letter-spacing:0.12px;">Фильтр п...</div>
<div class="t" style="left:15.70px;top:610.86px;font-size:14.4px;font-weight:normal;font-style:normal;color:#111417;letter-spacing:0.213px;">121576</div>
<div class="t" style="left:88.40px;top:610.86px;font-size:14.4px;font-weight:normal;font-style:normal;color:#111417;letter-spacing:0.361px;">000.4859. 011.000-119-210 Металлорукав</div>
<div class="t" style="left:529.00px;top:610.86px;font-size:14.4px;font-weight:normal;font-style:normal;color:#111417;letter-spacing:1.110px;">Шт</div>
<div class="t" style="left:709.00px;top:610.86px;font-size:14.4px;font-weight:normal;font-style:normal;color:#111417;letter-spacing:-0.035px;">Склад ГП</div>
<div class="t" style="left:963.75px;top:610.86px;font-size:14.4px;font-weight:normal;font-style:normal;color:#111417;letter-spacing:0.205px;">345.00</div>
<div class="t" style="left:1064.75px;top:610.86px;font-size:14.4px;font-weight:normal;font-style:normal;color:#111417;letter-spacing:0.205px;">1.0000</div>
<div class="t" style="left:1188.75px;top:610.86px;font-size:14.4px;font-weight:normal;font-style:normal;color:#111417;letter-spacing:0.205px;">230.00</div>
<div class="t" style="left:1249.00px;top:610.86px;font-size:14.4px;font-weight:normal;font-style:normal;color:#111417;letter-spacing:0.108px;">133187 ПРХ №3 от 24.09.2025 - ...</div>
<div class="t" style="left:1497.30px;top:610.86px;font-size:14.4px;font-weight:normal;font-style:normal;color:#111417;letter-spacing:0.000px;">1</div>
<div class="t" style="left:1569.80px;top:610.86px;font-size:14.4px;font-weight:normal;font-style:normal;color:#111417;letter-spacing:-0.102px;">Альфа ООО</div>
<div class="t" style="left:1772.70px;top:610.86px;font-size:14.4px;font-weight:normal;font-style:normal;color:#111417;letter-spacing:0.173px;">24.09.2025</div>
<div class="t" style="left:15.70px;top:642.38px;font-size:14.4px;font-weight:normal;font-style:normal;color:#111417;letter-spacing:0.213px;">121576</div>
<div class="t" style="left:88.40px;top:642.38px;font-size:14.4px;font-weight:normal;font-style:normal;color:#111417;letter-spacing:0.361px;">000.4859. 011.000-119-210 Металлорукав</div>
<div class="t" style="left:529.00px;top:642.38px;font-size:14.4px;font-weight:normal;font-style:normal;color:#111417;letter-spacing:1.110px;">Шт</div>
<div class="t" style="left:709.00px;top:642.38px;font-size:14.4px;font-weight:normal;font-style:normal;color:#111417;letter-spacing:-0.035px;">Склад ГП</div>
<div class="t" style="left:963.75px;top:642.38px;font-size:14.4px;font-weight:normal;font-style:normal;color:#111417;letter-spacing:0.205px;">345.00</div>
<div class="t" style="left:1056.52px;top:642.38px;font-size:14.4px;font-weight:normal;font-style:normal;color:#111417;letter-spacing:0.208px;">32.0000</div>
<div class="t" style="left:1176.41px;top:642.38px;font-size:14.4px;font-weight:normal;font-style:normal;color:#111417;letter-spacing:0.196px;">9 232.86</div>
<div class="t" style="left:1249.00px;top:642.38px;font-size:14.4px;font-weight:normal;font-style:normal;color:#111417;letter-spacing:0.108px;">133187 ПРХ №3 от 24.09.2025 - ...</div>
<div class="t" style="left:1497.30px;top:642.38px;font-size:14.4px;font-weight:normal;font-style:normal;color:#111417;letter-spacing:0.000px;">1</div>
<div class="t" style="left:1569.80px;top:642.38px;font-size:14.4px;font-weight:normal;font-style:normal;color:#111417;letter-spacing:-0.102px;">Альфа ООО</div>
<div class="t" style="left:1772.70px;top:642.38px;font-size:14.4px;font-weight:normal;font-style:normal;color:#111417;letter-spacing:0.173px;">24.09.2025</div>
<div class="t" style="left:15.70px;top:673.90px;font-size:14.4px;font-weight:normal;font-style:normal;color:#111417;letter-spacing:0.213px;">121576</div>
<div class="t" style="left:88.40px;top:673.90px;font-size:14.4px;font-weight:normal;font-style:normal;color:#111417;letter-spacing:0.361px;">000.4859. 011.000-119-210 Металлорукав</div>
<div class="t" style="left:529.00px;top:673.90px;font-size:14.4px;font-weight:normal;font-style:normal;color:#111417;letter-spacing:1.110px;">Шт</div>
<div class="t" style="left:709.00px;top:673.90px;font-size:14.4px;font-weight:normal;font-style:normal;color:#111417;letter-spacing:-0.035px;">Склад ГП</div>
<div class="t" style="left:963.75px;top:673.90px;font-size:14.4px;font-weight:normal;font-style:normal;color:#111417;letter-spacing:0.205px;">690.00</div>
<div class="t" style="left:1064.75px;top:673.90px;font-size:14.4px;font-weight:normal;font-style:normal;color:#111417;letter-spacing:0.205px;">1.0000</div>
<div class="t" style="left:1188.75px;top:673.90px;font-size:14.4px;font-weight:normal;font-style:normal;color:#111417;letter-spacing:0.205px;">575.00</div>
<div class="t" style="left:1249.00px;top:673.90px;font-size:14.4px;font-weight:normal;font-style:normal;color:#111417;letter-spacing:0.108px;">133185 ПРХ №3 от 24.09.2025 - ...</div>
<div class="t" style="left:1497.30px;top:673.90px;font-size:14.4px;font-weight:normal;font-style:normal;color:#111417;letter-spacing:0.000px;">1</div>
<div class="t" style="left:1569.80px;top:673.90px;font-size:14.4px;font-weight:normal;font-style:normal;color:#111417;letter-spacing:-0.102px;">Альфа ООО</div>
<div class="t" style="left:1772.70px;top:673.90px;font-size:14.4px;font-weight:normal;font-style:normal;color:#111417;letter-spacing:0.173px;">24.09.2025</div>
<div class="t" style="left:15.70px;top:705.42px;font-size:14.4px;font-weight:normal;font-style:normal;color:#111417;letter-spacing:0.213px;">121576</div>
<div class="t" style="left:88.40px;top:705.42px;font-size:14.4px;font-weight:normal;font-style:normal;color:#111417;letter-spacing:0.361px;">000.4859. 011.000-119-210 Металлорукав</div>
<div class="t" style="left:529.00px;top:705.42px;font-size:14.4px;font-weight:normal;font-style:normal;color:#111417;letter-spacing:1.110px;">Шт</div>
<div class="t" style="left:709.00px;top:705.42px;font-size:14.4px;font-weight:normal;font-style:normal;color:#111417;letter-spacing:-0.035px;">Склад ГП</div>
<div class="t" style="left:963.75px;top:705.42px;font-size:14.4px;font-weight:normal;font-style:normal;color:#111417;letter-spacing:0.205px;">240.00</div>
<div class="t" style="left:1064.75px;top:705.42px;font-size:14.4px;font-weight:normal;font-style:normal;color:#111417;letter-spacing:0.205px;">2.0000</div>
<div class="t" style="left:1188.75px;top:705.42px;font-size:14.4px;font-weight:normal;font-style:normal;color:#111417;letter-spacing:0.205px;">414.04</div>
<div class="t" style="left:1249.00px;top:705.42px;font-size:14.4px;font-weight:normal;font-style:normal;color:#111417;letter-spacing:0.108px;">133186 ПРХ №3 от 24.09.2025 - ...</div>
<div class="t" style="left:1497.30px;top:705.42px;font-size:14.4px;font-weight:normal;font-style:normal;color:#111417;letter-spacing:0.000px;">1</div>
<div class="t" style="left:1569.80px;top:705.42px;font-size:14.4px;font-weight:normal;font-style:normal;color:#111417;letter-spacing:-0.102px;">Альфа ООО</div>
<div class="t" style="left:1772.70px;top:705.42px;font-size:14.4px;font-weight:normal;font-style:normal;color:#111417;letter-spacing:0.173px;">24.09.2025</div>
<div class="t" style="left:15.70px;top:736.94px;font-size:14.4px;font-weight:normal;font-style:normal;color:#111417;letter-spacing:0.213px;">121576</div>
<div class="t" style="left:88.40px;top:736.94px;font-size:14.4px;font-weight:normal;font-style:normal;color:#111417;letter-spacing:0.361px;">000.4859. 011.000-119-210 Металлорукав</div>
<div class="t" style="left:529.00px;top:736.94px;font-size:14.4px;font-weight:normal;font-style:normal;color:#111417;letter-spacing:1.110px;">Шт</div>
<div class="t" style="left:709.00px;top:736.94px;font-size:14.4px;font-weight:normal;font-style:normal;color:#111417;letter-spacing:-0.035px;">Склад ГП</div>
<div class="t" style="left:963.75px;top:736.94px;font-size:14.4px;font-weight:normal;font-style:normal;color:#111417;letter-spacing:0.205px;">240.00</div>
<div class="t" style="left:1064.75px;top:736.94px;font-size:14.4px;font-weight:normal;font-style:normal;color:#111417;letter-spacing:0.205px;">2.0000</div>
<div class="t" style="left:1188.75px;top:736.94px;font-size:14.4px;font-weight:normal;font-style:normal;color:#111417;letter-spacing:0.205px;">360.00</div>
<div class="t" style="left:1249.00px;top:736.94px;font-size:14.4px;font-weight:normal;font-style:normal;color:#111417;letter-spacing:0.108px;">133186 ПРХ №3 от 24.09.2025 - ...</div>
<div class="t" style="left:1497.30px;top:736.94px;font-size:14.4px;font-weight:normal;font-style:normal;color:#111417;letter-spacing:0.000px;">1</div>
<div class="t" style="left:1569.80px;top:736.94px;font-size:14.4px;font-weight:normal;font-style:normal;color:#111417;letter-spacing:-0.102px;">Альфа ООО</div>
<div class="t" style="left:1772.70px;top:736.94px;font-size:14.4px;font-weight:normal;font-style:normal;color:#111417;letter-spacing:0.173px;">24.09.2025</div>
<div class="t" style="left:15.70px;top:768.46px;font-size:14.4px;font-weight:normal;font-style:normal;color:#111417;letter-spacing:0.213px;">121576</div>
<div class="t" style="left:88.40px;top:768.46px;font-size:14.4px;font-weight:normal;font-style:normal;color:#111417;letter-spacing:0.361px;">000.4859. 011.000-119-210 Металлорукав</div>
<div class="t" style="left:529.00px;top:768.46px;font-size:14.4px;font-weight:normal;font-style:normal;color:#111417;letter-spacing:1.110px;">Шт</div>
<div class="t" style="left:709.00px;top:768.46px;font-size:14.4px;font-weight:normal;font-style:normal;color:#111417;letter-spacing:-0.035px;">Склад ГП</div>
<div class="t" style="left:963.75px;top:768.46px;font-size:14.4px;font-weight:normal;font-style:normal;color:#111417;letter-spacing:0.205px;">240.00</div>
<div class="t" style="left:1056.52px;top:768.46px;font-size:14.4px;font-weight:normal;font-style:normal;color:#111417;letter-spacing:0.208px;">54.0000</div>
<div class="t" style="left:1168.19px;top:768.46px;font-size:14.4px;font-weight:normal;font-style:normal;color:#111417;letter-spacing:0.199px;">10 818.94</div>
<div class="t" style="left:1249.00px;top:768.46px;font-size:14.4px;font-weight:normal;font-style:normal;color:#111417;letter-spacing:0.108px;">133186 ПРХ №3 от 24.09.2025 - ...</div>
<div class="t" style="left:1497.30px;top:768.46px;font-size:14.4px;font-weight:normal;font-style:normal;color:#111417;letter-spacing:0.000px;">1</div>
<div class="t" style="left:1569.80px;top:768.46px;font-size:14.4px;font-weight:normal;font-style:normal;color:#111417;letter-spacing:-0.102px;">Альфа ООО</div>
<div class="t" style="left:1772.70px;top:768.46px;font-size:14.4px;font-weight:normal;font-style:normal;color:#111417;letter-spacing:0.173px;">24.09.2025</div>
<div class="t" style="left:15.70px;top:799.98px;font-size:14.4px;font-weight:normal;font-style:normal;color:#111417;letter-spacing:0.213px;">121576</div>
<div class="t" style="left:88.40px;top:799.98px;font-size:14.4px;font-weight:normal;font-style:normal;color:#111417;letter-spacing:0.361px;">000.4859. 011.000-119-210 Металлорукав</div>
<div class="t" style="left:529.00px;top:799.98px;font-size:14.4px;font-weight:normal;font-style:normal;color:#111417;letter-spacing:1.110px;">Шт</div>
<div class="t" style="left:709.00px;top:799.98px;font-size:14.4px;font-weight:normal;font-style:normal;color:#111417;letter-spacing:-0.035px;">Склад ГП</div>
<div class="t" style="left:963.75px;top:799.98px;font-size:14.4px;font-weight:normal;font-style:normal;color:#111417;letter-spacing:0.205px;">690.00</div>
<div class="t" style="left:1064.75px;top:799.98px;font-size:14.4px;font-weight:normal;font-style:normal;color:#111417;letter-spacing:0.205px;">1.0000</div>
<div class="t" style="left:1188.75px;top:799.98px;font-size:14.4px;font-weight:normal;font-style:normal;color:#111417;letter-spacing:0.205px;">580.87</div>
<div class="t" style="left:1249.00px;top:799.98px;font-size:14.4px;font-weight:normal;font-style:normal;color:#111417;letter-spacing:0.108px;">133185 ПРХ №3 от 24.09.2025 - ...</div>
<div class="t" style="left:1497.30px;top:799.98px;font-size:14.4px;font-weight:normal;font-style:normal;color:#111417;letter-spacing:0.000px;">1</div>
<div class="t" style="left:1569.80px;top:799.98px;font-size:14.4px;font-weight:normal;font-style:normal;color:#111417;letter-spacing:-0.102px;">Альфа ООО</div>
<div class="t" style="left:1772.70px;top:799.98px;font-size:14.4px;font-weight:normal;font-style:normal;color:#111417;letter-spacing:0.173px;">24.09.2025</div>
<div class="b" style="left:1824.00px;top:604.00px;width:15.00px;height:218.00px;background:#fff"></div>
<div class="b" style="left:1824.00px;top:505.00px;width:1.00px;height:98.00px;background:#fafafa"></div>
<div class="b" style="left:1830.40px;top:627.00px;width:11.60px;height:49.70px;background:#a9acb5;border-radius:5px"></div>
<svg class="b" style="left:1826.00px;top:610.00px;" width="13" height="10" viewBox="1826 610 13 10"><path d="M1828 618.4 L1833.5 612 L1839 618.4 Z" fill="#a9acb5"/></svg>
<div class="b" style="left:1836.20px;top:578.60px;width:11.80px;height:13.80px;border:2px solid #3c404c;border-radius:2.5px;box-sizing:border-box;background:#8a8d96"></div>
<div class="b" style="left:6.00px;top:410.00px;width:1824.00px;height:420.00px;border:5px solid #ed1c24;border-bottom-width:13.5px;box-sizing:border-box"></div>
</body></html>
